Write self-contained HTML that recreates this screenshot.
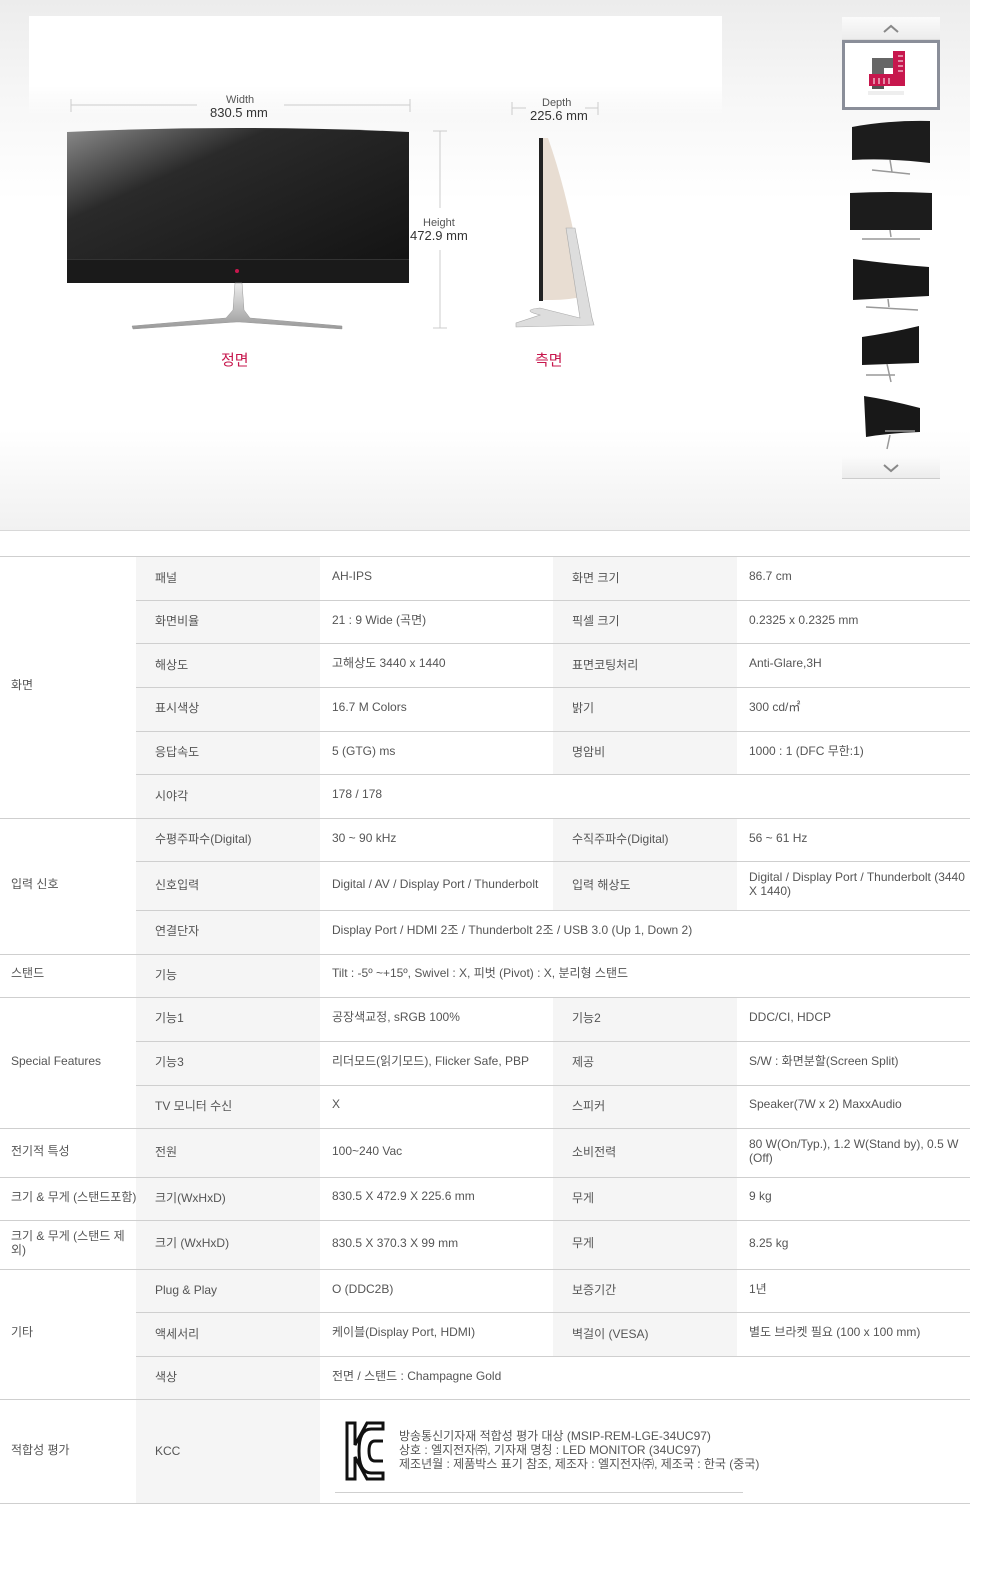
<!DOCTYPE html>
<html><head><meta charset="utf-8">
<style>
*{margin:0;padding:0;box-sizing:border-box}
body{width:990px;height:1583px;position:relative;background:#fff;font-family:"Liberation Sans","Noto Sans CJK KR",sans-serif;color:#555;font-size:12px;overflow:hidden}
.top{position:absolute;left:0;top:0;width:970px;height:531px;background:linear-gradient(#ececec 0,#f6f6f6 90px,#fff 200px,#fff 430px,#f1f1f1 530px);border-bottom:1px solid #d8d8d8}
.panel{position:absolute;left:29px;top:16px;width:693px;height:100px;background:linear-gradient(#fff 70%,rgba(255,255,255,0))}
.a{position:absolute;white-space:nowrap}
.t{position:absolute;white-space:nowrap;line-height:14px}
.hl{position:absolute;height:1px;background:#cfcfcf}
.g{position:absolute;background:#f5f5f5}
</style></head><body>
<div class="top"></div>
<div class="panel"></div>

<svg class="a" style="left:0;top:0" width="990" height="480" viewBox="0 0 990 480">
 <defs>
  <linearGradient id="scr" x1="0" y1="0" x2="1" y2="1"><stop offset="0" stop-color="#8a8a8a"/><stop offset=".3" stop-color="#2a2a2a"/><stop offset="1" stop-color="#111"/></linearGradient>
  <linearGradient id="mt" x1="0" y1="0" x2="0" y2="1"><stop offset="0" stop-color="#eee"/><stop offset="1" stop-color="#999"/></linearGradient>
 </defs>
 <g stroke="#ccc" stroke-width="1" fill="none">
  <line x1="71" y1="105" x2="197" y2="105"/><line x1="284" y1="105" x2="410" y2="105"/>
  <line x1="71" y1="99" x2="71" y2="112"/><line x1="410" y1="99" x2="410" y2="112"/>
  <line x1="512" y1="108" x2="526" y2="108"/><line x1="585" y1="108" x2="598" y2="108"/>
  <line x1="512" y1="102" x2="512" y2="115"/><line x1="598" y1="102" x2="598" y2="115"/>
  <line x1="440" y1="131" x2="440" y2="208"/><line x1="440" y1="250" x2="440" y2="328"/>
  <line x1="433" y1="131" x2="447" y2="131"/><line x1="433" y1="328" x2="447" y2="328"/>
 </g>
 <path d="M67 132 Q238 124 409 132 L409 283 L67 283 Z" fill="url(#scr)"/>
 <rect x="67" y="260" width="342" height="23" fill="#1a1a1a"/>
 <rect x="67" y="259" width="342" height="1" fill="#333"/>
 <circle cx="237" cy="271" r="2" fill="#c7174d"/>
 <path d="M235 283 L242 283 L244 310 L250 318 L342 326 L342 329 L240 322 L236 322 L133 329 L132 326 L226 318 L233 310 Z" fill="url(#mt)" stroke="#999" stroke-width=".5"/>
 <path d="M540 138 L548 138 Q570 200 584 290 L584 296 Q570 300 552 300 L540 300 Z" fill="#e8ddd2"/>
 <rect x="539" y="138" width="4" height="163" fill="#222"/>
 <path d="M566 228 L575 228 L592 318 L594 325 L516 327 L516 323 L540 315 Q520 310 540 308 L580 318 Z" fill="#ddd" stroke="#aaa" stroke-width=".6"/>
 <g>
  <path d="M852 127 Q890 120 930 121 L930 163 Q890 158 852 160 Z" fill="#1c1c1c"/><path d="M890 160 l2 12 M872 170 L910 174" stroke="#999" stroke-width="1.5"/>
  <path d="M850 193 Q892 191 932 193 L932 230 L850 230 Z" fill="#1c1c1c"/><path d="M890 230 l1 7 M862 239 L920 239" stroke="#999" stroke-width="1.5"/>
  <path d="M853 259 Q890 264 929 267 L929 296 Q890 298 853 300 Z" fill="#181818"/><path d="M888 299 l1 8 M866 307 L918 310" stroke="#999" stroke-width="1.5"/>
  <path d="M862 337 Q890 333 919 326 L919 363 Q890 364 862 365 Z" fill="#181818"/><path d="M887 364 l4 18 M866 375 L895 375" stroke="#999" stroke-width="1.5"/>
  <path d="M864 396 Q890 400 920 408 L920 432 Q890 433 866 437 Z" fill="#181818"/><path d="M890 435 l-3 14 M885 431 L915 431" stroke="#999" stroke-width="1.5"/>
 </g>
</svg>

<div class="t" style="left:226px;top:93px;font-size:11px">Width</div>
<div class="t" style="left:210px;top:106px;font-size:13px;color:#333">830.5 mm</div>
<div class="t" style="left:542px;top:96px;font-size:11px">Depth</div>
<div class="t" style="left:530px;top:109px;font-size:13px;color:#333">225.6 mm</div>
<div class="t" style="left:423px;top:216px;font-size:11px">Height</div>
<div class="t" style="left:410px;top:229px;font-size:13px;color:#333">472.9 mm</div>
<div class="t" style="left:221px;top:354px;font-size:15px;color:#c7174d">정면</div>
<div class="t" style="left:535px;top:354px;font-size:15px;color:#c7174d">측면</div>

<div class="a" style="left:842px;top:17px;width:98px;height:23px;background:linear-gradient(#fbfbfb,#ececec);border-bottom:1px solid #ddd"></div>
<svg class="a" style="left:883px;top:24px" width="16" height="10"><path d="M1 8 L8 2 L15 8" stroke="#888" stroke-width="2" fill="none"/></svg>
<div class="a" style="left:842px;top:40px;width:98px;height:70px;border:3px solid #8a8e99;background:#fff"></div>
<svg class="a" style="left:862px;top:48px" width="60" height="52">
 <rect x="10" y="10" width="26" height="26" fill="#666"/><rect x="22" y="20" width="12" height="14" fill="#fff"/>
 <rect x="38" y="10" width="3" height="14" fill="#555"/>
 <path d="M31 3 L43 3 L43 38 L7 38 L7 26 L31 26 Z" fill="#c7174d"/>
 <path d="M36 8h5M36 13h5M36 18h5M36 23h5M12 30v6M17 30v6M22 30v6M27 30v6" stroke="#fff" stroke-width="1"/>
 <rect x="10" y="38" width="12" height="3" fill="#555"/><rect x="6" y="43" width="36" height="4" fill="#eee"/>
</svg>
<div class="a" style="left:842px;top:457px;width:98px;height:22px;background:linear-gradient(#fbfbfb,#ececec);border-bottom:1px solid #ccc"></div>
<svg class="a" style="left:883px;top:463px" width="16" height="10"><path d="M1 2 L8 8 L15 2" stroke="#888" stroke-width="2" fill="none"/></svg>

<div class="g" style="left:136px;top:556px;width:184px;height:947px"></div>
<div class="g" style="left:553px;top:556px;width:184px;height:218px"></div>
<div class="g" style="left:553px;top:818px;width:184px;height:92px"></div>
<div class="g" style="left:553px;top:997px;width:184px;height:359px"></div>

<div class="hl" style="left:0;top:556px;width:970px"></div>
<div class="hl" style="left:136px;top:600px;width:834px"></div>
<div class="hl" style="left:136px;top:643px;width:834px"></div>
<div class="hl" style="left:136px;top:687px;width:834px"></div>
<div class="hl" style="left:136px;top:731px;width:834px"></div>
<div class="hl" style="left:136px;top:774px;width:834px"></div>
<div class="hl" style="left:0;top:818px;width:970px"></div>
<div class="hl" style="left:136px;top:861px;width:834px"></div>
<div class="hl" style="left:136px;top:910px;width:834px"></div>
<div class="hl" style="left:0;top:954px;width:970px"></div>
<div class="hl" style="left:0;top:997px;width:970px"></div>
<div class="hl" style="left:136px;top:1041px;width:834px"></div>
<div class="hl" style="left:136px;top:1085px;width:834px"></div>
<div class="hl" style="left:0;top:1128px;width:970px"></div>
<div class="hl" style="left:0;top:1177px;width:970px"></div>
<div class="hl" style="left:0;top:1220px;width:970px"></div>
<div class="hl" style="left:0;top:1269px;width:970px"></div>
<div class="hl" style="left:136px;top:1312px;width:834px"></div>
<div class="hl" style="left:136px;top:1356px;width:834px"></div>
<div class="hl" style="left:0;top:1399px;width:970px"></div>
<div class="hl" style="left:0;top:1503px;width:970px"></div>

<div class="t" style="left:11px;top:678px">화면</div>
<div class="t" style="left:11px;top:877px">입력 신호</div>
<div class="t" style="left:11px;top:966px">스탠드</div>
<div class="t" style="left:11px;top:1054px">Special Features</div>
<div class="t" style="left:11px;top:1144px">전기적 특성</div>
<div class="t" style="left:11px;top:1190px">크기 &amp; 무게 (스탠드포함)</div>
<div class="t" style="left:11px;top:1229px;width:120px;white-space:normal">크기 &amp; 무게 (스탠드 제외)</div>
<div class="t" style="left:11px;top:1325px">기타</div>
<div class="t" style="left:11px;top:1443px">적합성 평가</div>

<div class="t" style="left:155px;top:571px">패널</div><div class="t" style="left:332px;top:569px">AH-IPS</div><div class="t" style="left:572px;top:571px">화면 크기</div><div class="t" style="left:749px;top:569px">86.7 cm</div>
<div class="t" style="left:155px;top:614px">화면비율</div><div class="t" style="left:332px;top:613px">21 : 9 Wide (곡면)</div><div class="t" style="left:572px;top:614px">픽셀 크기</div><div class="t" style="left:749px;top:613px">0.2325 x 0.2325 mm</div>
<div class="t" style="left:155px;top:658px">해상도</div><div class="t" style="left:332px;top:656px">고해상도 3440 x 1440</div><div class="t" style="left:572px;top:658px">표면코팅처리</div><div class="t" style="left:749px;top:656px">Anti-Glare,3H</div>
<div class="t" style="left:155px;top:701px">표시색상</div><div class="t" style="left:332px;top:700px">16.7 M Colors</div><div class="t" style="left:572px;top:701px">밝기</div><div class="t" style="left:749px;top:700px">300 cd/㎡</div>
<div class="t" style="left:155px;top:745px">응답속도</div><div class="t" style="left:332px;top:744px">5 (GTG) ms</div><div class="t" style="left:572px;top:745px">명암비</div><div class="t" style="left:749px;top:744px">1000 : 1 (DFC 무한:1)</div>
<div class="t" style="left:155px;top:789px">시야각</div><div class="t" style="left:332px;top:787px">178 / 178</div>
<div class="t" style="left:155px;top:832px">수평주파수(Digital)</div><div class="t" style="left:332px;top:831px">30 ~ 90 kHz</div><div class="t" style="left:572px;top:832px">수직주파수(Digital)</div><div class="t" style="left:749px;top:831px">56 ~ 61 Hz</div>
<div class="t" style="left:155px;top:878px">신호입력</div><div class="t" style="left:332px;top:877px">Digital / AV / Display Port / Thunderbolt</div><div class="t" style="left:572px;top:878px">입력 해상도</div><div class="t" style="left:749px;top:870px;width:222px;white-space:normal">Digital / Display Port / Thunderbolt (3440 X 1440)</div>
<div class="t" style="left:155px;top:924px">연결단자</div><div class="t" style="left:332px;top:923px">Display Port / HDMI 2조 / Thunderbolt 2조 / USB 3.0 (Up 1, Down 2)</div>
<div class="t" style="left:155px;top:968px">기능</div><div class="t" style="left:332px;top:966px">Tilt : -5º ~+15º, Swivel : X, 피벗 (Pivot) : X, 분리형 스탠드</div>
<div class="t" style="left:155px;top:1011px">기능1</div><div class="t" style="left:332px;top:1010px">공장색교정, sRGB 100%</div><div class="t" style="left:572px;top:1011px">기능2</div><div class="t" style="left:749px;top:1010px">DDC/CI, HDCP</div>
<div class="t" style="left:155px;top:1055px">기능3</div><div class="t" style="left:332px;top:1054px">리더모드(읽기모드), Flicker Safe, PBP</div><div class="t" style="left:572px;top:1055px">제공</div><div class="t" style="left:749px;top:1054px">S/W : 화면분할(Screen Split)</div>
<div class="t" style="left:155px;top:1099px">TV 모니터 수신</div><div class="t" style="left:332px;top:1097px">X</div><div class="t" style="left:572px;top:1099px">스피커</div><div class="t" style="left:749px;top:1097px">Speaker(7W x 2) MaxxAudio</div>
<div class="t" style="left:155px;top:1145px">전원</div><div class="t" style="left:332px;top:1144px">100~240 Vac</div><div class="t" style="left:572px;top:1145px">소비전력</div><div class="t" style="left:749px;top:1137px;width:222px;white-space:normal">80 W(On/Typ.), 1.2 W(Stand by), 0.5 W (Off)</div>
<div class="t" style="left:155px;top:1191px">크기(WxHxD)</div><div class="t" style="left:332px;top:1189px">830.5 X 472.9 X 225.6 mm</div><div class="t" style="left:572px;top:1191px">무게</div><div class="t" style="left:749px;top:1189px">9 kg</div>
<div class="t" style="left:155px;top:1236px">크기 (WxHxD)</div><div class="t" style="left:332px;top:1236px">830.5 X 370.3 X 99 mm</div><div class="t" style="left:572px;top:1236px">무게</div><div class="t" style="left:749px;top:1236px">8.25 kg</div>
<div class="t" style="left:155px;top:1283px">Plug &amp; Play</div><div class="t" style="left:332px;top:1282px">O (DDC2B)</div><div class="t" style="left:572px;top:1283px">보증기간</div><div class="t" style="left:749px;top:1282px">1년</div>
<div class="t" style="left:155px;top:1327px">액세서리</div><div class="t" style="left:332px;top:1325px">케이블(Display Port, HDMI)</div><div class="t" style="left:572px;top:1327px">벽걸이 (VESA)</div><div class="t" style="left:749px;top:1325px">별도 브라켓 필요 (100 x 100 mm)</div>
<div class="t" style="left:155px;top:1370px">색상</div><div class="t" style="left:332px;top:1369px">전면 / 스탠드 : Champagne Gold</div>
<div class="t" style="left:155px;top:1444px">KCC</div>

<svg class="a" style="left:345px;top:1421px" width="40" height="60" viewBox="0 0 40 60">
 <path d="M2 2 L10 2 L10 24 L22 2 L38 2 L38 8 L26 8 Q14 8 14 30 Q14 52 26 52 L38 52 L38 58 L22 58 L10 36 L10 58 L2 58 Z" fill="none" stroke="#111" stroke-width="3"/>
 <path d="M38 20 L30 20 Q24 20 24 30 Q24 40 30 40 L38 40" fill="none" stroke="#111" stroke-width="3"/>
</svg>
<div class="t" style="left:399px;top:1429px;line-height:14px">방송통신기자재 적합성 평가 대상 (MSIP-REM-LGE-34UC97)<br>상호 : 엘지전자㈜, 기자재 명칭 : LED MONITOR (34UC97)<br>제조년월 : 제품박스 표기 참조, 제조자 : 엘지전자㈜, 제조국 : 한국 (중국)</div>
<div class="hl" style="left:335px;top:1492px;width:408px"></div>
</body></html>
